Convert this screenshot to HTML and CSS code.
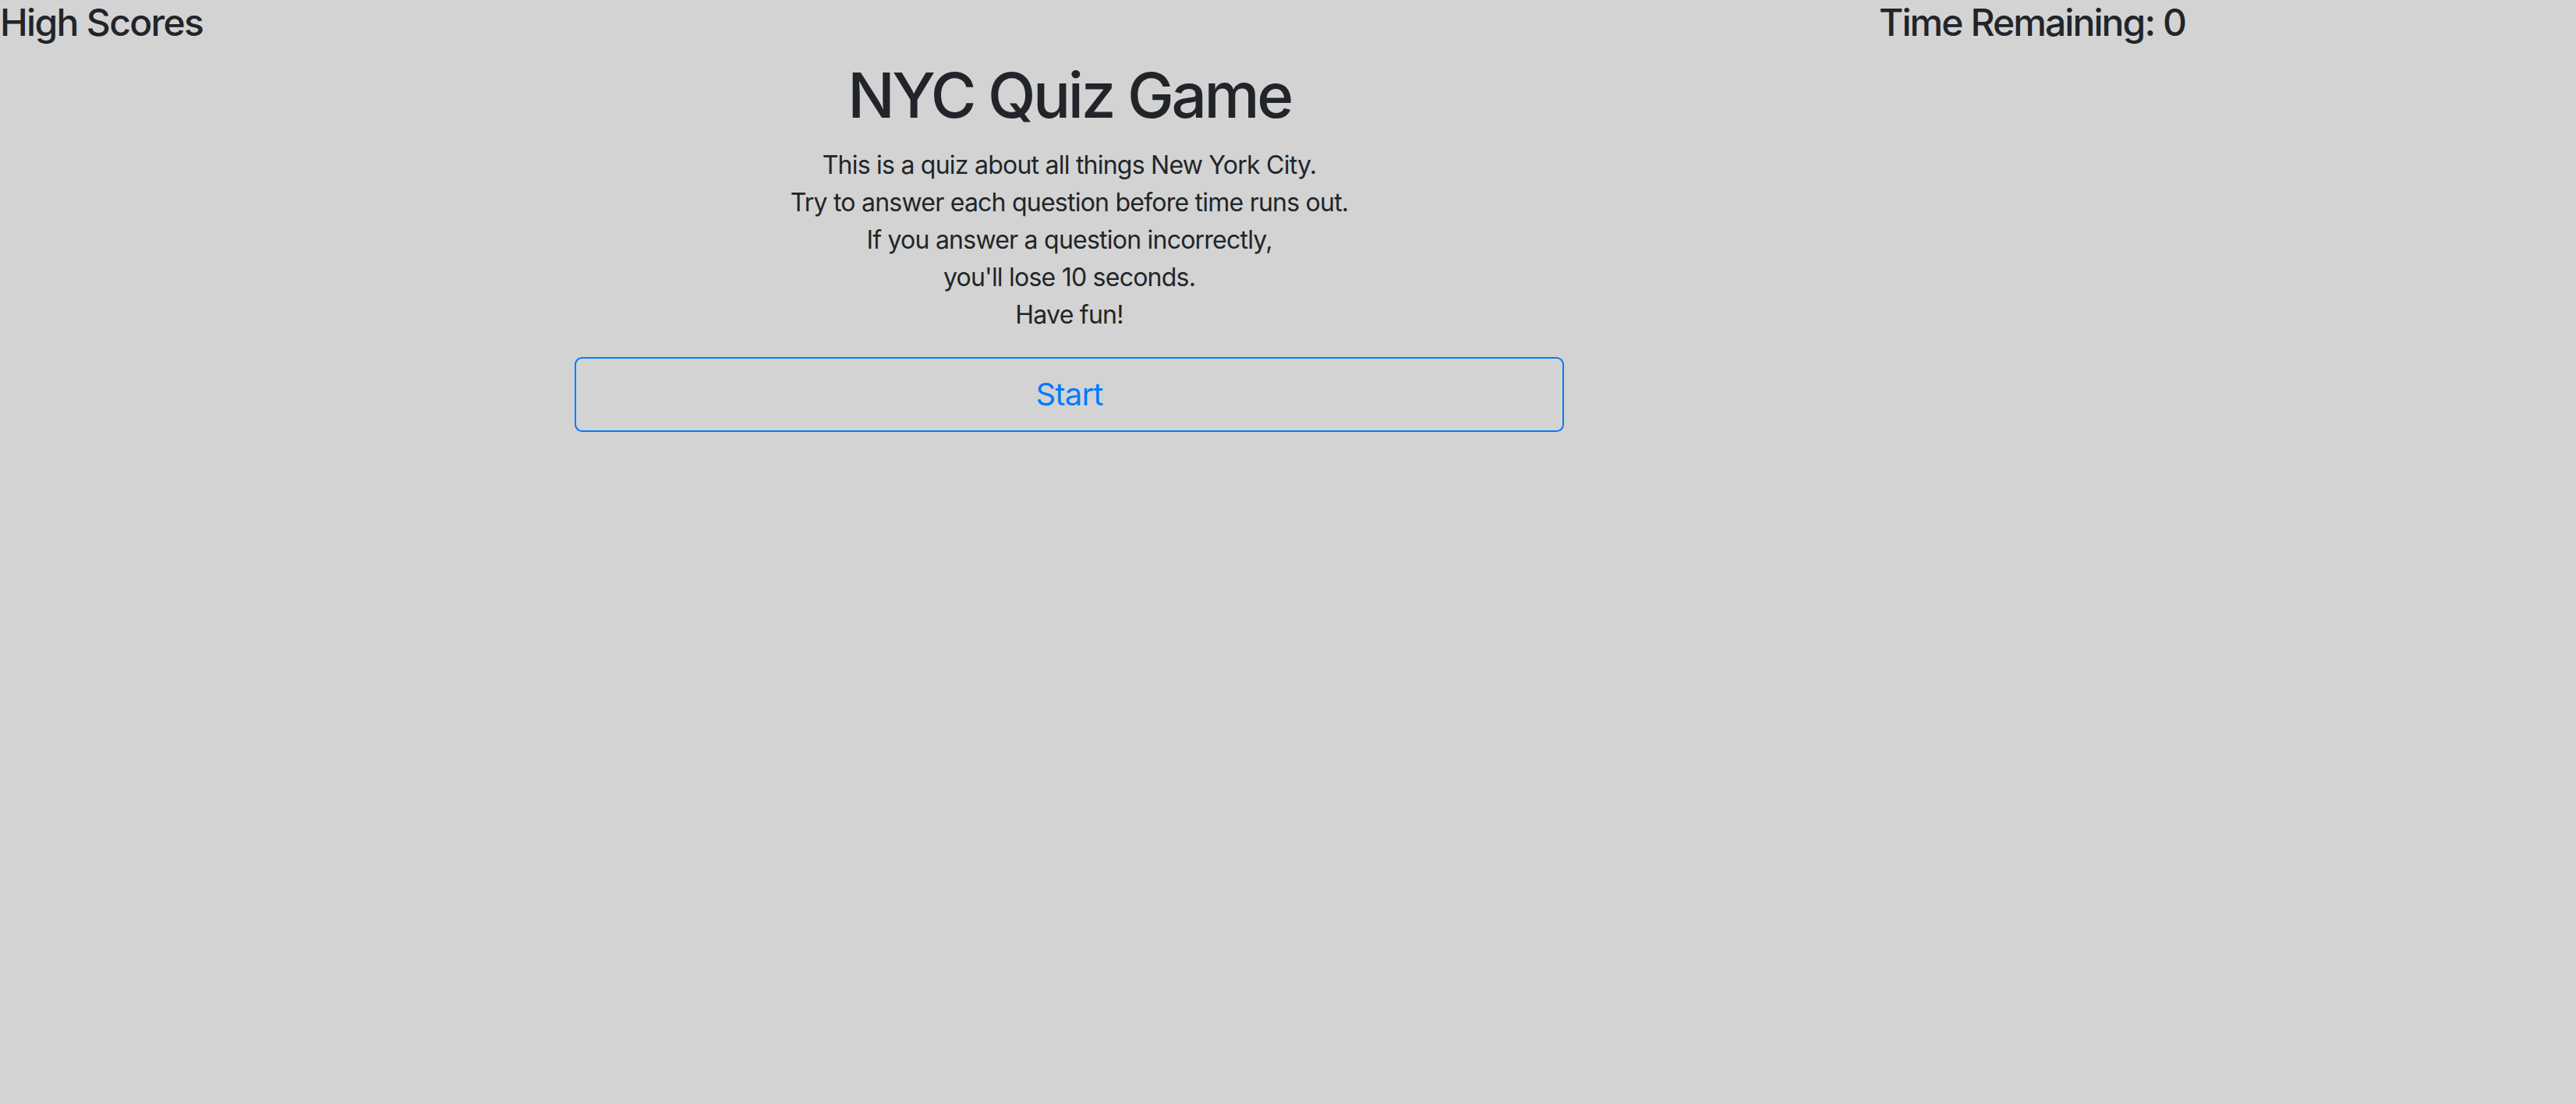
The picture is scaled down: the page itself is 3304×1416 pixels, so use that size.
FILE: index.html
```html
<!DOCTYPE html>
<html lang="en">
<head>
<meta charset="utf-8">
<title>NYC Quiz Game</title>
<link rel="stylesheet" href="styles.css">
</head>
<body>
<header class="topbar">
  <h4 class="high-scores">High Scores</h4>
  <h4 class="timer">Time Remaining: <span>0</span></h4>
</header>
<main class="quiz">
  <h1 class="title">NYC Quiz Game</h1>
  <p class="intro">This is a quiz about all things New York City.<br>Try to answer each question before time runs out.<br>If you answer a question incorrectly,<br>you'll lose 10 seconds.<br>Have fun!</p>
  <button class="start-btn" type="button">Start</button>
</main>
</body>
</html>
```
FILE: styles.css
```css
html, body {
  margin: 0;
  padding: 0;
}
body {
  background: #d3d3d3;
  color: #212529;
  font-family: Inter, "Noto Sans", "Liberation Sans", sans-serif;
  font-size: 32px;
  line-height: 1.5;
  min-height: 1416px;
}
.topbar {
  display: flex;
  align-items: flex-start;
}
.high-scores, .timer {
  font-size: 48px;
  font-weight: 500;
  line-height: 1.2;
  letter-spacing: -0.035em;
  margin: 0 0 16px 0;
}
.timer {
  letter-spacing: -0.04em;
}
.high-scores {
  width: 2410px;
}
.quiz {
  margin-left: 737px;
  width: 1269px;
  text-align: center;
}
.title {
  font-size: 80px;
  font-weight: 500;
  line-height: 1.2;
  letter-spacing: -0.042em;
  margin: 0 0 18px 0;
}
.intro {
  margin: 0 0 30px 0;
  letter-spacing: -0.024em;
}
.start-btn {
  display: block;
  width: 100%;
  box-sizing: border-box;
  font-family: inherit;
  font-size: 40px;
  line-height: 1.5;
  letter-spacing: -0.02em;
  padding: 16px 32px;
  color: #007bff;
  background: transparent;
  border: 2px solid #007bff;
  border-radius: 9.6px;
}
```
